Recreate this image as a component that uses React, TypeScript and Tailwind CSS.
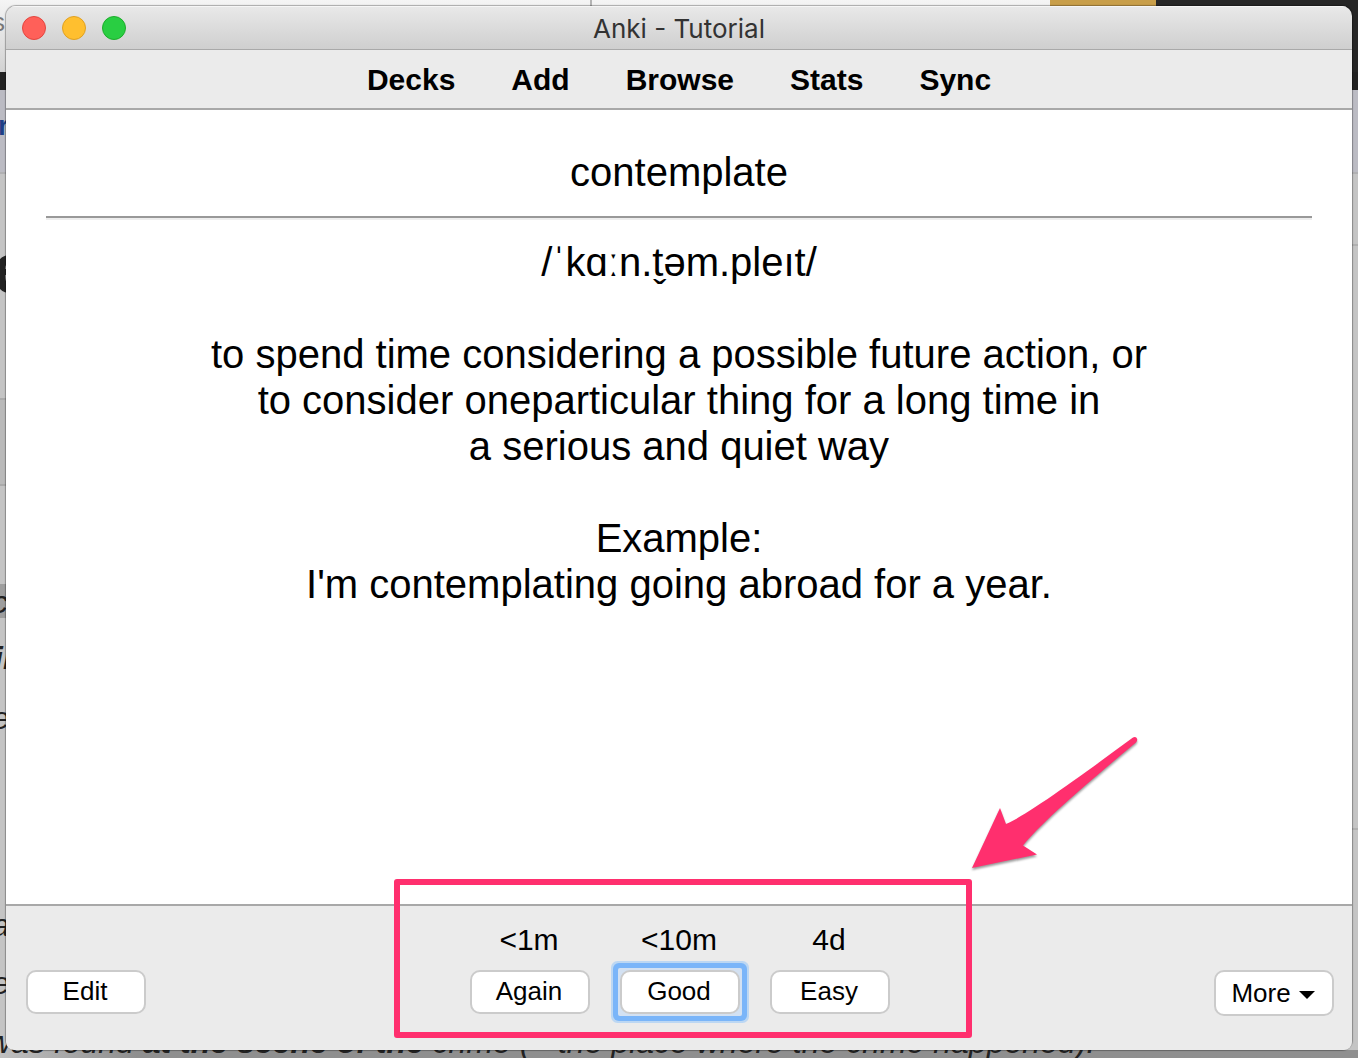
import React from "react";

const navItems = ["Decks", "Add", "Browse", "Stats", "Sync"];

const answers = [
  { interval: "<1m", label: "Again", focused: false },
  { interval: "<10m", label: "Good", focused: true },
  { interval: "4d", label: "Easy", focused: false },
];

const buttonBase =
  "w-[120px] rounded-[10px] border-2 border-[#cbcbcb] bg-white text-[26px] leading-[30px] text-black outline-none";

function Backdrop() {
  return (
    <div aria-hidden="true" className="absolute inset-0 overflow-hidden bg-[#c4c4c4] text-[#222]">
      <div className="flex h-[72px] bg-gradient-to-b from-[#f5f5f5] to-[#d2d2d2]">
        <div className="w-[592px] border-r-2 border-[#b4b4b4]" />
        <div className="flex-1" />
        <div className="w-[106px] bg-[#c89e49]" />
        <div className="w-[202px] bg-[#262626]" />
      </div>
      <div className="h-[18px] bg-[#222]" />
      <div className="h-[84px] border-b-2 border-[#b0b0b2] bg-[#bbbbc3]" />
      <div className="flex h-[312px]">
        <div className="w-1/2">
          <div className="h-[224px]" />
          <div className="h-[88px] border-y-2 border-[#aaa] bg-[#bababa]" />
        </div>
        <div className="w-1/2">
          <div className="h-[72px] border-b-2 border-[#b0b0b0]" />
        </div>
      </div>
      <div className="flex h-[344px]">
        <div className="w-1/2 pt-[98px]">
          <div className="h-[34px] bg-[#9e9e9e]" />
        </div>
        <div className="w-1/2 border-b-2 border-[#b0b0b0]" />
      </div>
      <div className="absolute inset-x-0 bottom-0 h-2 bg-gradient-to-r from-[#c0c0c0] via-[#8f8f8f] via-10% to-[#8f8f8f] to-95%" />
      <span className="absolute -left-2 top-1.5 text-[26px] leading-8 text-[#777]">s</span>
      <span className="absolute -left-0.5 top-[108px] text-[28px] font-bold leading-9 text-[#1f3f86]">r</span>
      <span className="absolute -left-2 top-[232px] text-[72px] font-bold leading-[72px]">e</span>
      <span className="absolute -left-2 top-[584px] text-[32px] italic leading-9">c</span>
      <span className="absolute -left-1.5 top-[640px] text-[32px] font-bold italic leading-9">il</span>
      <span className="absolute -left-2 top-[700px] text-[32px] italic leading-9">e</span>
      <span className="absolute -left-2 top-[907px] text-[32px] italic leading-9">a</span>
      <span className="absolute -left-2 top-[965px] text-[32px] italic leading-9">e</span>
      <p className="absolute -bottom-1 -left-3 whitespace-nowrap text-[32px] italic leading-10">
        was found <b>at the scene of the</b> crime (= the place where the crime happened).
      </p>
    </div>
  );
}

function TitleBar() {
  return (
    <header className="relative flex h-11 items-center justify-center border-b border-[#a9a9a9] bg-gradient-to-b from-[#e9e9e9] to-[#cfcfcf] shadow-[inset_0_1px_0_#f6f6f6]">
      <div className="absolute left-4 flex gap-4">
        <button aria-label="Close" className="size-6 rounded-full border border-[#e2463f] bg-[#ff6059]" />
        <button aria-label="Minimize" className="size-6 rounded-full border border-[#dfa023] bg-[#ffbf2f]" />
        <button aria-label="Zoom" className="size-6 rounded-full border border-[#1dad2b] bg-[#29ce42]" />
      </div>
      <h1 className="pt-0.5 font-[Inter,sans-serif] text-[26px] leading-8 text-[#333]">Anki - Tutorial</h1>
    </header>
  );
}

function Annotation() {
  return (
    <>
      <div className="pointer-events-none absolute -left-[76px] -right-[82px] -top-[27px] bottom-3 rounded-[3px] border-[6px] border-[#ff2f6e]" />
      <svg
        aria-hidden="true"
        className="pointer-events-none absolute -top-[170px] left-[500px] h-[140px] w-[172px] drop-shadow-[0_2px_1px_rgba(0,0,0,0.4)]"
        viewBox="0 0 172 140"
      >
        <path
          fill="#ff2f6e"
          d="M2 132 L30 72 L36 88 C59 78 112 39 163 1.600 C166 -0.500 169 3.500 166 6.500 C120 45 76 82 53 109.500 L67 118.500 Z"
        />
      </svg>
    </>
  );
}

export default function App() {
  return (
    <div className="relative flex min-h-screen px-1.5 pb-2 pt-1.5 font-['Liberation_Sans',Arial,sans-serif] text-black">
      <Backdrop />
      <div className="relative flex flex-1 flex-col rounded-[10px] shadow-[0_0_1px_1px_rgba(0,0,0,0.3)]">
        <div className="overflow-hidden rounded-t-[10px]">
          <TitleBar />
          <nav className="flex h-[60px] items-center justify-center gap-14 border-b-2 border-[#a8a8a8] bg-[#ebebeb] pt-0.5 text-[30px] font-bold leading-9">
            {navItems.map((item) => (
              <a key={item} href="#">
                {item}
              </a>
            ))}
          </nav>
        </div>

        <main className="flex-1 bg-white px-10 pt-[39px] text-center text-[40px] leading-[46px]">
          <p>contemplate</p>
          <hr className="mb-[19px] mt-[21px] h-1 border-b-2 border-t-2 border-b-[#eee] border-t-[#999]" />
          <p>/ˈkɑːn.t̬əm.pleıt/</p>
          <p className="mt-[46px]">
            to spend time considering a possible future action, or
            <br />
            to consider oneparticular thing for a long time in
            <br />a serious and quiet way
          </p>
          <p className="mt-[46px]">
            Example:
            <br />
            I'm contemplating going abroad for a year.
          </p>
        </main>

        <footer className="grid grid-cols-[1fr_auto_1fr] rounded-b-[8px] border-t-2 border-[#a8a8a8] bg-[#ebebeb] pl-5 pr-[18px]">
          <div className="pt-16">
            <button className={`${buttonBase} h-11 pb-0.5 pr-0.5`}>Edit</button>
          </div>
          <div className="relative flex gap-[30px] pb-9 pt-4">
            {answers.map(({ interval, label, focused }) => (
              <div key={label} className="flex flex-col items-center gap-3">
                <label htmlFor={label} className="pr-0.5 text-[30px] leading-9">
                  {interval}
                </label>
                <div className="relative">
                  {focused && (
                    <div className="absolute -inset-[2px] rounded-[2px] bg-[#d3e1f2] shadow-[0_0_0_5px_#7ab5f9,0_0_0_7px_#bcd7f3]" />
                  )}
                  <button id={label} className={`${buttonBase} relative block h-11 pb-0.5 pr-0.5`}>
                    {label}
                  </button>
                </div>
              </div>
            ))}
            <Annotation />
          </div>
          <div className="flex items-start justify-end pt-16">
            <button className={`${buttonBase} flex h-[46px] items-center justify-center gap-2 pr-0.5`}>
              More
              <svg aria-hidden="true" className="mt-1 h-2 w-4" viewBox="0 0 16 8">
                <path d="M0 0H16L8 8Z" />
              </svg>
            </button>
          </div>
        </footer>
      </div>
    </div>
  );
}
